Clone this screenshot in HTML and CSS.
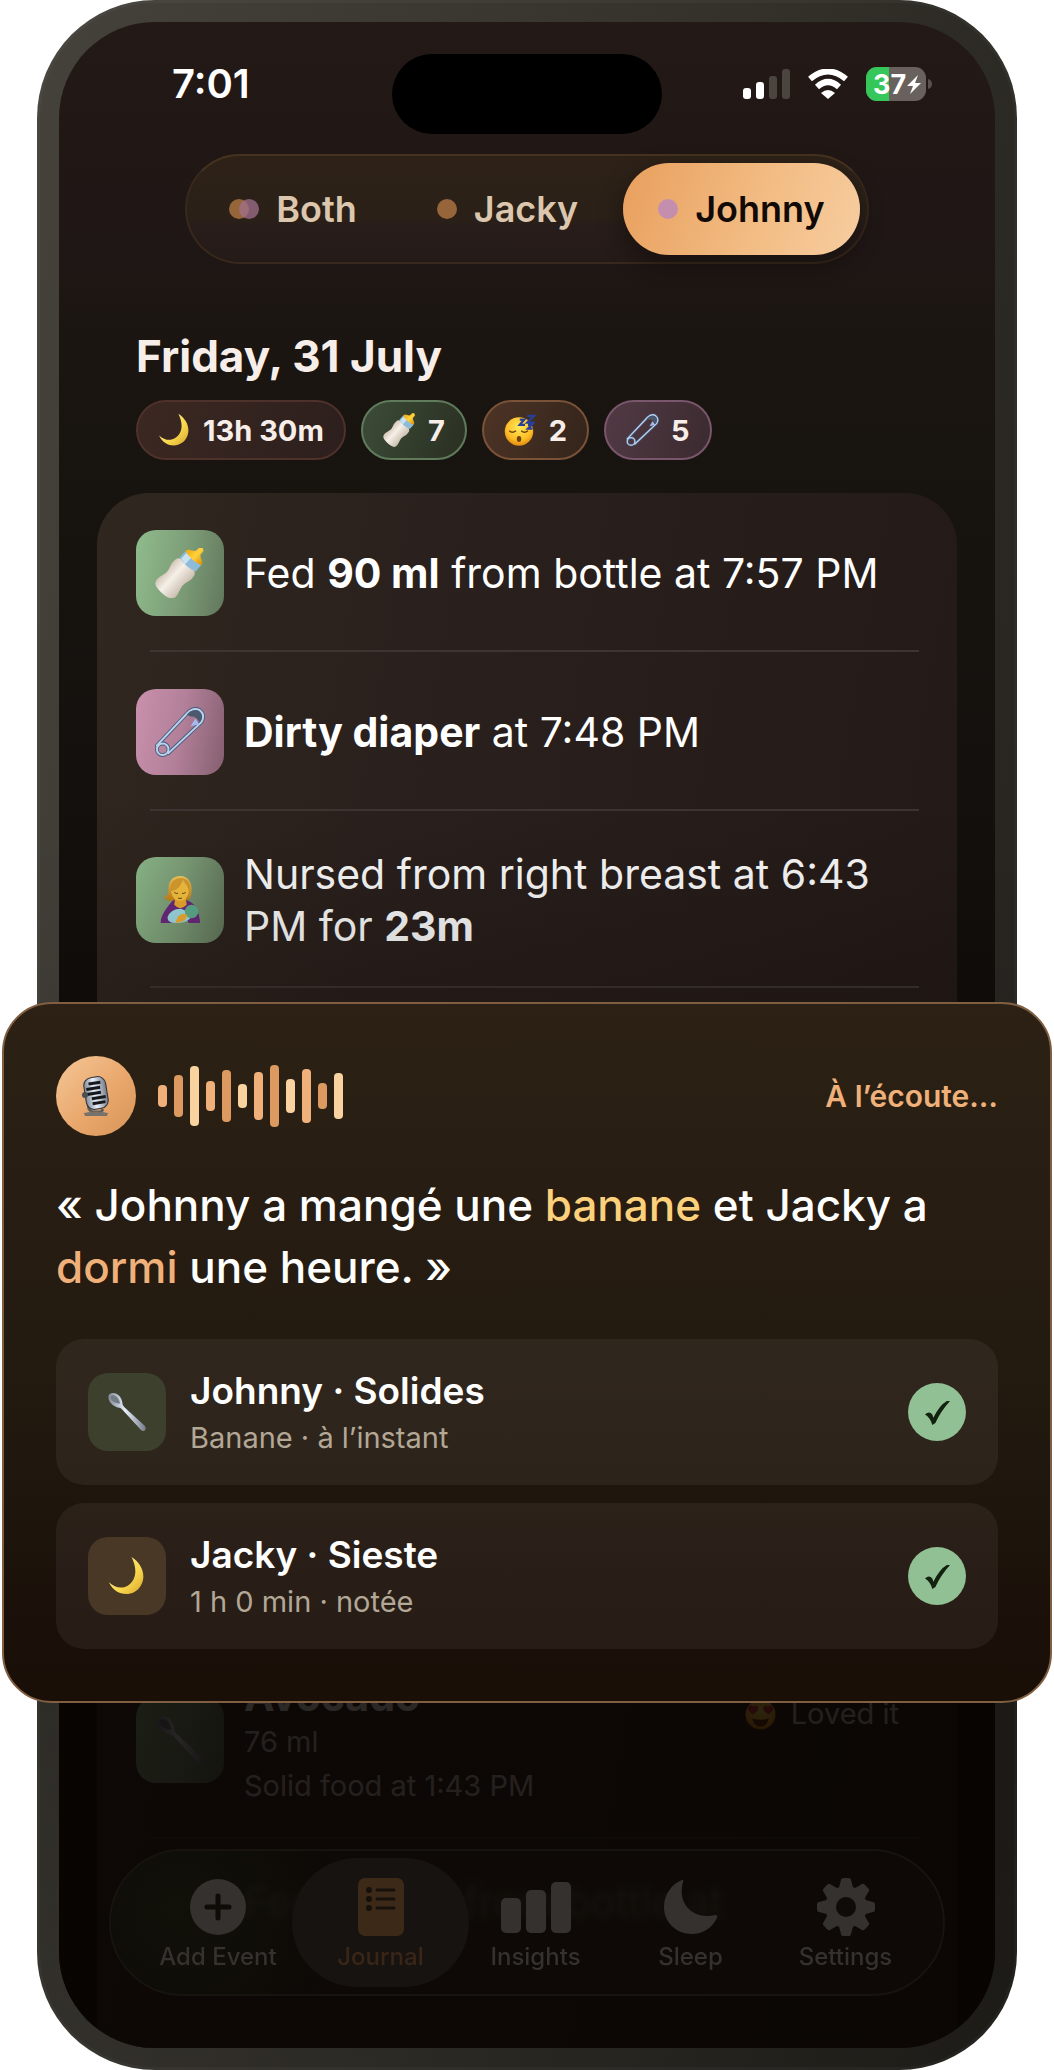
FILE: index.html
```
<!DOCTYPE html>
<html lang="fr">
<head>
<meta charset="utf-8">
<meta name="viewport" content="width=device-width, initial-scale=1">
<title>Journal</title>
<link rel="stylesheet" href="styles.css">
</head>
<body>
<svg class="defs" aria-hidden="true">
  <defs>
    <linearGradient id="gMoon" x1="0" y1="0" x2="1" y2="1"><stop offset="0" stop-color="#fff0a0"/><stop offset=".6" stop-color="#f8d84e"/><stop offset="1" stop-color="#dca52c"/></linearGradient>
    <linearGradient id="gMilk" x1="0" y1="0" x2="1" y2="0"><stop offset="0" stop-color="#d3c6b8"/><stop offset=".4" stop-color="#f6f0e8"/><stop offset="1" stop-color="#cbbeb0"/></linearGradient>
    <linearGradient id="gTeat" x1="0" y1="0" x2="1" y2="0"><stop offset="0" stop-color="#f2a90c"/><stop offset=".5" stop-color="#ffd23d"/><stop offset="1" stop-color="#d98d06"/></linearGradient>
    <radialGradient id="gFace" cx=".5" cy=".35" r=".65"><stop offset="0" stop-color="#ffe95c"/><stop offset=".7" stop-color="#fdbc25"/><stop offset="1" stop-color="#e08a10"/></radialGradient>
    <linearGradient id="gSteel" x1="0" y1="0" x2="1" y2="0"><stop offset="0" stop-color="#7f8794"/><stop offset=".45" stop-color="#e8f0fb"/><stop offset="1" stop-color="#747b87"/></linearGradient>
    <linearGradient id="gHair" x1="0" y1="0" x2="0" y2="1"><stop offset="0" stop-color="#f7cf63"/><stop offset="1" stop-color="#c98417"/></linearGradient>
    <symbol id="moon" viewBox="0 0 40 44"><path d="M25 1C36 8 42 21 35 33 28 45 8 46 0 29 10 38 21 36 27 26 31 18 29 9 25 1Z" fill="url(#gMoon)"/></symbol>
    <symbol id="bottle" viewBox="0 0 52 52">
      <g transform="rotate(42 26 26)">
        <path d="M13 20Q13 15 18 14H34Q39 15 39 20C40 26 36 30 37 36 38 42 41 46 38 51 35 55 17 55 14 51 11 46 14 42 15 36 16 30 12 26 13 20Z" fill="url(#gMilk)"/>
        <path d="M15 5H37L37 14Q26 18 15 14Z" fill="#8dbbd8"/><path d="M17 6H24V16L17 14Z" fill="#c8e2f1"/>
        <path d="M15 5C15 0 22 1 23 -3L23 -7Q26 -11 29 -7L29 -3C30 1 37 0 37 5Q26 9 15 5Z" fill="url(#gTeat)"/>
      </g>
    </symbol>
    <symbol id="pin" viewBox="0 0 52 52">
      <g fill="none" stroke-linecap="round">
        <path d="M2 40 34 6Q40 0 46 3 53 8 48 16L14 48" stroke="#4c5c7c" stroke-width="4"/>
        <circle cx="8" cy="44" r="6" stroke="#4c5c7c" stroke-width="4"/>
        <path d="M2 40 34 6Q40 0 46 3 53 8 48 16L14 48" stroke="#b9d3ee" stroke-width="2"/>
        <circle cx="8" cy="44" r="6" stroke="#b9d3ee" stroke-width="2"/>
      </g>
      <path d="M33 8Q38 2 45 4 50 8 48 14L46 16Q43 9 37 10Z" fill="#4b596f"/><path d="M42 12 46 18 37 20Z" fill="#a5bbf0"/>
    </symbol>
    <symbol id="nursing" viewBox="0 0 44 52">
      <path d="M10 17C9 6 15 1 22 1 31 1 35 9 34 17 34 23 31 27 28 27H14Q5 26 6 22 10 21 10 17Z" fill="url(#gHair)"/>
      <path d="M14 27Q22 22 31 27 41 31 43 50H31L26 40 16 50H2Q1 42 14 27Z" fill="#6b2a80"/>
      <path d="M17 24H28L29 31Q22 38 16 31Z" fill="#f0ad2f"/><ellipse cx="22" cy="17" rx="9" ry="10" fill="#fbc540"/>
      <path d="M12 17Q22 16 25 5 30 11 32 18 35 5 24 3 11 3 12 17Z" fill="#dda12f"/>
      <path d="M16 18q2 2 4 1M24 19q2 1 4-1M20 24q2 1 4 0" fill="none" stroke="#6b4412"/>
      <path d="M9 44Q12 35 23 35L35 40Q33 50 17 50 9 50 9 44Z" fill="#9fdfe6"/><circle cx="34" cy="38" r="7" fill="#5fae8f"/>
      <path d="M20 43q5-5 10-1l-3 5q-5 3-10 3z" fill="#f2b035"/>
    </symbol>
    <symbol id="spoon" viewBox="0 0 52 52">
      <path d="M3 3C10-2 19 5 20 14 20 17 21 18 23 20L49 44Q52 48 49 50 46 52 43 48L20 23C18 21 17 20 14 20 5 18-1 8 3 3Z" fill="url(#gSteel)"/><path d="M5 5C10 2 16 8 17 15 10 16 3 10 5 5Z" fill="#737b85"/>
    </symbol>
    <symbol id="sleeping" viewBox="0 0 44 44">
      <circle cx="20" cy="24" r="19" fill="url(#gFace)"/><path d="M7 23q4 4 9 0M23 23q4 4 9 0" fill="none" stroke="#70430c" stroke-width="2"/><ellipse cx="20" cy="34" rx="3" ry="4" fill="#70430c"/>
      <path d="M21 8h6l-6 7h7M31 3h9l-9 9h10M32 15h5l-5 5h6" fill="none" stroke="#273f98" stroke-width="3"/>
    </symbol>
    <symbol id="loved" viewBox="0 0 44 44">
      <circle cx="22" cy="22" r="20" fill="url(#gFace)"/><path d="M11 22Q2 14 7 10q4-2 5 2 4-4 7 0 2 5-8 10ZM33 22Q24 17 26 12q3-4 6 0 3-4 6-1 3 5-5 11Z" fill="#e2303c"/><path d="M11 27Q22 31 33 27 31 38 22 38 13 38 11 27Z" fill="#6f2b12"/>
    </symbol>
    <symbol id="mic" viewBox="0 0 28 40">
      <path d="M5 20 7 33 10 36H19L21 33" fill="none" stroke="#5b5d60" stroke-width="3"/><path d="M2 37Q14 34 26 37L25 40H3Z" fill="#77716b"/>
      <g transform="rotate(-9 14 17)"><rect x="3" y="1" width="22" height="32" rx="8" fill="url(#gSteel)" stroke="#2e3035" stroke-width="1"/>
      <path d="M8 7H20M5 12H19M5 17H19M9 22H23M9 27H22" stroke="#16181c" stroke-width="3"/></g>
      <circle cx="3" cy="19" r="3" fill="#4b4e55"/>
    </symbol>
  </defs>
</svg>

<div class="stage">
  <main class="phone" lang="en">
    <div class="screen">
      <header class="status">
        <time class="status__time">7:01</time>
        <div class="status__island"></div>
        <div class="status__icons">
          <svg width="47" height="30" viewBox="0 0 47 30" role="img" aria-label="Signal"><rect y="19" width="8" height="11" rx="3" fill="#fff"/><rect x="13" y="13" width="8" height="17" rx="3" fill="#fff"/><rect x="26" y="7" width="8" height="23" rx="3" fill="#4b4540"/><rect x="39" width="8" height="30" rx="3" fill="#4b4540"/></svg>
          <svg width="40" height="30" viewBox="0 0 40 30" role="img" aria-label="Wi-Fi"><path d="M2 10Q20-5 38 10M9 18Q20 8 31 18" fill="none" stroke="#fff" stroke-width="6"/><path d="M13 24Q20 18 27 24L20 30Z" fill="#fff"/></svg>
          <svg width="66" height="34" viewBox="0 0 66 34" role="img" aria-label="Battery"><clipPath id="bat"><rect width="60" height="34" rx="11"/></clipPath><g clip-path="url(#bat)"><rect width="60" height="34" fill="#68615e"/><rect width="23" height="34" fill="#35c759"/></g><path d="M62 12q4 1 4 5t-4 5z" fill="#57504d"/><text x="7" y="27" class="battery-text">37</text><path d="M52 8 41 19H47L44 27 55 16H49Z" fill="#fff"/></svg>
        </div>
      </header>

      <div class="segment" role="group" aria-label="Child">
        <button class="segment__tab" type="button"><span class="dots"><span class="dot dot--jacky"></span><span class="dot dot--johnny"></span></span>Both</button>
        <button class="segment__tab" type="button"><span class="dot dot--jacky"></span>Jacky</button>
        <button class="segment__tab segment__tab--on" type="button" aria-pressed="true"><span class="dot dot--solid"></span>Johnny</button>
      </div>

      <section class="day">
        <h1 class="day__title">Friday, 31 July</h1>
        <ul class="chips">
          <li class="chip chip--night"><svg><use href="#moon"/></svg>13h 30m</li>
          <li class="chip chip--feed"><svg><use href="#bottle"/></svg>7</li>
          <li class="chip chip--nap"><svg><use href="#sleeping"/></svg>2</li>
          <li class="chip chip--diaper"><svg><use href="#pin"/></svg>5</li>
        </ul>
      </section>

      <ul class="log">
        <li class="log__item"><div class="row"><span class="tile tile--green"><svg><use href="#bottle"/></svg></span><p>Fed <b>90 ml</b> from bottle at 7:57 PM</p></div></li>
        <li class="log__item"><div class="row"><span class="tile tile--pink"><svg><use href="#pin"/></svg></span><p><b>Dirty diaper</b> at 7:48 PM</p></div></li>
        <li class="log__item"><div class="row"><span class="tile tile--green"><svg><use href="#nursing"/></svg></span><p>Nursed from right breast at 6:43 PM for <b>23m</b></p></div></li>
        <li class="log__item log__item--solid"><div class="row"><span class="tile tile--green"><svg><use href="#spoon"/></svg></span>
          <div class="food"><h2 class="food__name">Avocado</h2><p class="food__line">76 ml</p><p class="food__line">Solid food at 1:43 PM</p></div>
          <span class="loved"><svg><use href="#loved"/></svg>Loved it</span></div></li>
        <li class="log__item log__item--last"><p>Fed 120 ml from bottle at</p></li>
      </ul>

      <nav class="tabs">
        <button class="tab" type="button"><svg viewBox="0 0 60 60"><circle cx="30" cy="30" r="28" fill="#34312e"/><path d="M19 30H41M30 19V41" stroke="#0f0b07" stroke-width="5" stroke-linecap="round"/></svg>Add Event</button>
        <button class="tab tab--on" type="button"><svg viewBox="0 0 60 60"><rect x="7" y="1" width="46" height="58" rx="7" fill="#3c2917"/><path d="M26 13H43M26 22H43M26 31H43" stroke="#17110c" stroke-width="3" stroke-linecap="round"/><g fill="#17110c"><circle cx="18" cy="13" r="3"/><circle cx="18" cy="22" r="3"/><circle cx="18" cy="31" r="3"/></g></svg>Journal</button>
        <button class="tab" type="button"><svg class="tab__bars" viewBox="0 0 70 60"><g fill="#34312e"><rect y="21" width="20" height="35" rx="5"/><rect x="25" y="13" width="20" height="43" rx="5"/><rect x="50" y="5" width="20" height="51" rx="5"/></g></svg>Insights</button>
        <button class="tab" type="button"><svg viewBox="0 0 60 60"><path d="M21 3Q23 2 22 5C16 27 32 43 54 38Q57 38 56 41C51 51 42 57 31 57 15 57 3 45 3 30 3 17 11 7 21 3Z" fill="#34312e"/></svg>Sleep</button>
        <button class="tab" type="button"><svg viewBox="0 0 60 60"><g fill="#34312e"><circle cx="30" cy="30" r="21"/><path id="tooth" d="M22 14 25 3Q25 1 28 1H32Q35 1 35 3L38 14V46L35 57Q35 59 32 59H28Q25 59 25 57L22 46Z"/><use href="#tooth" transform="rotate(45 30 30)"/><use href="#tooth" transform="rotate(90 30 30)"/><use href="#tooth" transform="rotate(135 30 30)"/></g><circle cx="30" cy="30" r="10" fill="#0f0b08"/></svg>Settings</button>
      </nav>
    </div>
  </main>

  <section class="sheet" aria-live="polite">
    <header class="sheet__head">
      <span class="mic"><svg><use href="#mic"/></svg></span>
      <svg class="wave" width="185" height="62" viewBox="0 0 185 62" aria-hidden="true">
        <g fill="#efb07a"><rect y="20" width="9" height="22" rx="4"/><rect x="48" y="16" width="9" height="30" rx="4"/><rect x="96" y="7" width="9" height="48" rx="4"/><rect x="144" y="4" width="9" height="54" rx="4"/></g>
        <g fill="#dc9a60"><rect x="16" y="10" width="9" height="42" rx="4"/><rect x="64" y="5" width="9" height="52" rx="4"/><rect x="112" width="9" height="62" rx="4"/><rect x="160" y="18" width="9" height="26" rx="4"/></g>
        <g fill="#f8d3a0"><rect x="32" y="1" width="9" height="60" rx="4"/><rect x="80" y="19" width="9" height="24" rx="4"/><rect x="128" y="14" width="9" height="34" rx="4"/><rect x="176" y="8" width="9" height="46" rx="4"/></g>
      </svg>
      <span class="sheet__state">À l’écoute…</span>
    </header>
    <p class="quote">« Johnny a mangé une <em class="quote__food">banane</em> et Jacky a <em class="quote__nap">dormi</em> une heure. »</p>
    <ul class="results">
      <li class="result"><span class="result__icon result__icon--food"><svg><use href="#spoon"/></svg></span><div class="result__text"><h2>Johnny · Solides</h2><p>Banane · à l’instant</p></div><span class="check"><svg viewBox="0 0 24 24"><path d="M0 14Q4 10 7 14L8 17Q14 5 21 1H24Q15 11 10 22L7 24Q5 17 0 14Z" fill="#13220f"/></svg></span></li>
      <li class="result"><span class="result__icon result__icon--nap"><svg><use href="#moon"/></svg></span><div class="result__text"><h2>Jacky · Sieste</h2><p>1 h 0 min · notée</p></div><span class="check"><svg viewBox="0 0 24 24"><path d="M0 14Q4 10 7 14L8 17Q14 5 21 1H24Q15 11 10 22L7 24Q5 17 0 14Z" fill="#13220f"/></svg></span></li>
    </ul>
  </section>
</div>
</body>
</html>
```
FILE: styles.css
```
* { box-sizing: border-box; }

body {
  margin: 0;
  background: #fff;
  color: #fff;
  font-family: Inter, "Liberation Sans", sans-serif;
}

h1, h2, p, ul { margin: 0; padding: 0; font-weight: 400; }
ul { list-style: none; }
em { font-style: normal; }
svg { display: block; flex: none; }
button { border: 0; background: none; color: inherit; font: inherit; padding: 0; }
.defs { position: absolute; width: 0; height: 0; }

/* The sheet shares the phone's grid cell so it lies over the screen. */
.stage { display: grid; grid-template-columns: minmax(0, 1fr); }
.phone, .sheet { grid-area: 1 / 1; }

.phone {
  display: flex;
  min-height: 100vh;
  margin: 0 37px;
  padding: 22px;
  border-radius: 118px;
  background:
    linear-gradient(180deg, transparent 40%, rgba(0, 0, 0, .25) 82%, rgba(0, 0, 0, .15) 100%),
    linear-gradient(100deg, #45423c 0%, #34322b 50%, #22201b 100%);
  box-shadow: inset 0 0 0 3px rgba(255, 255, 255, .03);
}

.screen {
  position: relative;
  flex: 1;
  min-width: 0;
  display: flex;
  flex-direction: column;
  overflow: hidden;
  border-radius: 96px;
  background: linear-gradient(180deg, #231917 0%, #1f1715 11%, #1a1510 17%, #17130f 24%, #120e0b 47%, #0c0703 80%, #0a0502 100%);
}

.screen::after {
  content: "";
  position: absolute;
  inset: 0;
  background: linear-gradient(180deg, transparent 38%, rgba(8, 4, 1, .15) 46%, rgba(8, 4, 2, .86) 80%);
}

.status {
  display: grid;
  grid-template-columns: 1fr 270px 1fr;
  align-items: start;
  padding-top: 32px;
}
.status__time { padding-left: 113px; font-size: 40px; font-weight: 600; line-height: 60px; }
.status__island { height: 80px; border-radius: 40px; background: #000; }
.status__icons { display: flex; align-items: center; justify-content: flex-end; gap: 18px; height: 60px; padding-right: 63px; }
.battery-text { fill: #fff; font-size: 27px; font-weight: 700; }

.segment {
  display: flex;
  gap: 10px;
  align-self: center;
  height: 110px;
  margin-top: 20px;
  padding: 7px;
  border: 2px solid #38281d;
  border-top-color: #46331f;
  border-radius: 55px;
  background: linear-gradient(180deg, #2e2218, #2a2017 60%, #281d1a 66%, #241a17);
}
.segment__tab {
  display: flex;
  align-items: center;
  gap: 17px;
  padding: 0 35px;
  border-radius: 46px;
  color: #dcc6ae;
  font-size: 36px;
  font-weight: 600;
}
.segment__tab--on {
  background: linear-gradient(110deg, #e89f5d, #f2bb82 55%, #f7cda0);
  color: #120a06;
  box-shadow: 0 8px 24px rgba(0, 0, 0, .4);
}
.dots { display: flex; }
.dot { width: 20px; height: 20px; border-radius: 50%; }
.dot--jacky { background: #966539; }
.dot--johnny { background: rgba(160, 112, 140, .75); }
.dots .dot--johnny { margin-left: -10px; }
.dot--solid { background: #c48fae; }

.day { margin-top: 66px; padding: 0 77px; color: #f8eee9; }
.day__title { font-size: 44px; font-weight: 700; line-height: 52px; }
.chips { display: flex; gap: 15px; margin-top: 18px; }
.chip {
  display: flex;
  align-items: center;
  gap: 12px;
  height: 60px;
  padding: 0 20px;
  border: 2px solid;
  border-radius: 30px;
  font-size: 29px;
  font-weight: 700;
}
.chip svg { width: 33px; height: 34px; overflow: visible; }
.chip--night { background: linear-gradient(110deg, #3c2822, #2c1f1d); border-color: #4f312c; }
.chip--feed { background: linear-gradient(110deg, #3c4c37, #2a2f22); border-color: #5f7b5c; }
.chip--nap { background: linear-gradient(110deg, #4d3426, #33241b); border-color: #795238; }
.chip--diaper { background: linear-gradient(110deg, #523a45, #3a2a2e); border-color: #79566b; }

.log {
  flex: 1;
  display: flex;
  flex-direction: column;
  margin: 33px 38px 0;
  border-radius: 52px 52px 0 0;
  background: linear-gradient(100deg, #30271f, #2a201d 30%, #241b18 80%, #231816);
  font-size: 41px;
  line-height: 52px;
}
.log__item { margin: 0 38px 0 53px; padding: 37px 0 34px; border-bottom: 2px solid #3c3531; }
.log__item--solid { margin-top: auto; padding: 0 0 29px; }
.log__item--last { padding-left: 94px; padding-bottom: 120px; border: 0; }
.row { display: flex; align-items: center; gap: 20px; margin-left: -14px; }
.log b { font-weight: 700; }

.tile {
  flex: none;
  display: flex;
  align-items: center;
  justify-content: center;
  width: 88px;
  height: 86px;
  border-radius: 20px;
}
.tile svg { width: 50px; height: 50px; overflow: visible; }
.tile--green { background: linear-gradient(100deg, #8fbc8c, #7e9f79 50%, #62775c); }
.tile--pink { background: linear-gradient(100deg, #c990ac, #b28099 50%, #855f70); }

.food { flex: 1; }
.food__name { font-size: 41px; font-weight: 700; line-height: 48px; }
.food__line { font-size: 29px; line-height: 44px; color: #cfc8c4; }
.loved { display: flex; align-items: center; gap: 14px; margin: 0 20px 52px 0; color: #cfc8c4; font-size: 29px; }
.loved svg { width: 33px; height: 33px; }

.tabs {
  position: absolute;
  z-index: 1;
  left: 50px;
  right: 50px;
  bottom: 52px;
  display: grid;
  grid-template-columns: 170fr 155fr 155fr 155fr 155fr;
  padding: 7px 20px 7px 22px;
  border: 2px solid #17130f;
  border-radius: 74px;
  background: radial-gradient(circle at 8% 40%, rgba(17, 18, 10, .85), rgba(15, 11, 7, .75) 22%);
  backdrop-filter: blur(3px);
}
.tab {
  position: relative;
  display: flex;
  flex-direction: column;
  align-items: center;
  height: 129px;
  padding-top: 19px;
  color: #34312e;
  font-size: 24px;
  font-weight: 500;
  line-height: 40px;
}
.tab svg { position: relative; width: 60px; height: 60px; }
.tab .tab__bars { width: 70px; }
.tab--on { color: #3a2617; }
.tab--on::before {
  content: "";
  position: absolute;
  inset: 0 -11px;
  z-index: -1;
  border-radius: 65px;
  background: #171310;
}

.sheet {
  align-self: start;
  z-index: 2;
  margin: 1002px 2px 0;
  padding: 52px;
  border: 2px solid #7f5e42;
  border-radius: 50px;
  background: linear-gradient(180deg, #2c2114 0%, #261c12 35%, #20180e 65%, #1a1009 88%, #1a0f07 100%);
}
.sheet__head { display: flex; align-items: center; gap: 22px; }
.mic {
  display: flex;
  align-items: center;
  justify-content: center;
  width: 80px;
  height: 80px;
  border-radius: 50%;
  background: linear-gradient(135deg, #f5c797, #e9a76c 55%, #d89458);
}
.mic svg { width: 28px; height: 40px; overflow: visible; }
.sheet__state { margin-left: auto; color: #efb07a; font-size: 30px; font-weight: 600; }

.quote { margin: 38px 0 41px; font-size: 44px; font-weight: 500; line-height: 62px; }
.quote__food { color: #fdd07c; }
.quote__nap { color: #efb07a; }

.results { display: grid; gap: 18px; }
.result {
  display: flex;
  align-items: center;
  gap: 24px;
  padding: 24px 32px;
  border-radius: 28px;
  background: rgba(255, 245, 240, .06);
}
.result__icon { display: flex; align-items: center; justify-content: center; width: 78px; height: 78px; border-radius: 20px; }
.result__icon svg { width: 40px; height: 40px; overflow: visible; }
.result__icon--food { background: #3d402c; }
.result__icon--nap { background: #4a3827; }
.result__text { flex: 1; padding-top: 4px; }
.result__text h2 { font-size: 37px; font-weight: 600; line-height: 48px; }
.result__text p { color: #b3a796; font-size: 29px; line-height: 46px; }
.check { display: flex; align-items: center; justify-content: center; width: 58px; height: 58px; border-radius: 50%; background: #90c093; }
.check svg { width: 25px; height: 25px; }
```
